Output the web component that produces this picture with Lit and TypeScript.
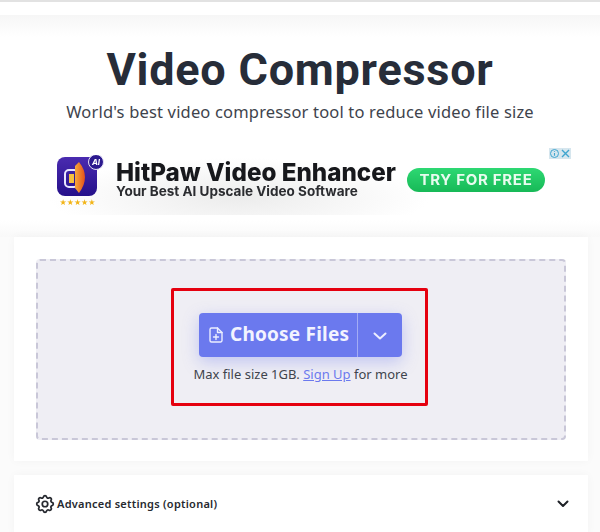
import { LitElement, css, html } from 'lit';
import { customElement } from 'lit/decorators.js';

@customElement('app-root')
export class AppRoot extends LitElement {
  static styles = css`
    :host {
      display: block;
      width: 600px;
      height: 532px;
      overflow: hidden;
      background: #fbfbfb;
      font-family: 'Noto Sans', 'Liberation Sans', sans-serif;
      color: #2b303a;
    }

    .topbar {
      height: 13px;
      background: #fff;
      border-top: 2px solid #e2e2e2;
    }

    .hero {
      height: 222px;
      padding-top: 28px;
      box-sizing: border-box;
      background: linear-gradient(#f6f6f6, #fff 22px, #fff 205px, #f9f9f9);
      text-align: center;
    }

    h1 {
      margin: 0;
      font-family: Roboto, sans-serif;
      font-size: 45px;
      line-height: 54px;
      font-weight: 700;
      letter-spacing: 0.75px;
      color: #272d39;
    }

    .sub {
      margin: 3px 0 0;
      font-size: 16.5px;
      line-height: 24px;
      letter-spacing: 0.17px;
      color: #3e434c;
    }

    .ad {
      display: flex;
      align-items: flex-start;
      box-sizing: border-box;
      width: 522px;
      height: 67px;
      margin: 24px 0 0 49px;
      padding: 7px 0 0 8px;
      position: relative;
      text-align: left;
      filter: blur(0.35px);
      background: radial-gradient(ellipse 190px 40px at 190px 50px, #ececec, #fff 100%);
    }

    .logo-col {
      display: flex;
      flex-direction: column;
      align-items: center;
      width: 41px;
    }

    .stars {
      margin-top: 2px;
      font-family: 'DejaVu Sans', sans-serif;
      font-size: 8px;
      line-height: 8px;
      color: #f2b417;
    }

    .ad-copy {
      margin-left: 18px;
      width: 280px;
      color: #17181c;
    }

    .ad-title {
      font-family: Inter, sans-serif;
      font-size: 24.2px;
      line-height: 24px;
      margin-top: 6px;
      font-weight: 800;
      white-space: nowrap;
    }

    .ad-tag {
      font-family: Inter, sans-serif;
      font-size: 13.5px;
      line-height: 14px;
      margin-top: -1px;
      font-weight: 700;
      white-space: nowrap;
      color: #2b2c30;
    }

    .ad-cta {
      margin: 13px 0 0 11px;
      width: 138px;
      height: 24px;
      border-radius: 12px;
      background: linear-gradient(#2ed873, #17b957);
      color: #e9fbef;
      font-family: Inter, sans-serif;
      font-size: 15px;
      line-height: 24px;
      font-weight: 700;
      letter-spacing: 0.7px;
      text-align: center;
    }

    .ad-flags {
      position: absolute;
      top: 0;
      right: 0;
      display: flex;
      width: 22px;
      height: 11px;
      background: #d6e6ee;
    }

    .card {
      margin: 0 12px 0 14px;
      background: #fff;
      box-shadow: 0 0 9px rgba(0, 0, 0, 0.035);
    }

    .upload {
      height: 224px;
      padding: 22px 22px 21px;
      box-sizing: border-box;
    }

    .drop {
      display: flex;
      align-items: center;
      justify-content: center;
      height: 100%;
      box-sizing: border-box;
      padding: 0 3px 5px 0;
      background: #efeef4;
      border: 2px dashed #c9c7d8;
      border-radius: 4px;
    }

    .highlight {
      display: flex;
      flex-direction: column;
      align-items: center;
      box-sizing: border-box;
      width: 257px;
      height: 118px;
      padding: 22px 0 0 2px;
      border: 3px solid #e5000f;
      border-radius: 2px;
    }

    .choose {
      display: flex;
      width: 203px;
      height: 44px;
      border-radius: 4px;
      background: #6b79ee;
      color: #f2f3ff;
      box-shadow: 0 5px 16px rgba(107, 121, 238, 0.35);
    }

    .choose-main {
      display: flex;
      align-items: center;
      gap: 6px;
      box-sizing: border-box;
      width: 159px;
      padding-left: 9px;
      border-right: 1px solid #a3acf5;
      font-size: 19px;
      font-weight: 700;
      letter-spacing: 0.2px;
      white-space: nowrap;
    }

    .choose-label {
      padding-bottom: 3px;
    }

    .choose-more {
      display: flex;
      flex: 1;
      align-items: center;
      justify-content: center;
      padding-top: 2px;
    }

    .limit {
      margin-top: 8px;
      font-size: 13px;
      line-height: 18px;
      color: #40444d;
      white-space: nowrap;
    }

    .limit a {
      color: #6b79ee;
      text-decoration: underline;
    }

    .settings {
      display: flex;
      align-items: center;
      justify-content: space-between;
      box-sizing: border-box;
      height: 60px;
      margin-top: 14px;
      padding: 0 18px 3px 20px;
      font-size: 11px;
      font-weight: 600;
      letter-spacing: 0.25px;
      color: #26292f;
    }

    .settings-label {
      display: flex;
      align-items: center;
      gap: 1px;
    }

    svg {
      display: block;
    }
  `;

  render() {
    return html`
      <div class="topbar"></div>
      <section class="hero">
        <h1>Video Compressor</h1>
        <p class="sub">World's best video compressor tool to reduce video file size</p>
        <div class="ad">
          <div class="logo-col">
            <svg width="48" height="42" viewBox="0 0 48 42" style="margin-right:-7px">
              <defs>
                <linearGradient id="tile" x1="0" y1="0" x2="0" y2="1">
                  <stop offset="0" stop-color="#4a2bb0" />
                  <stop offset="1" stop-color="#25108a" />
                </linearGradient>
                <linearGradient id="cone" x1="0" y1="0" x2="1" y2="0">
                  <stop offset="0" stop-color="#f7a93a" />
                  <stop offset="1" stop-color="#e2501c" />
                </linearGradient>
              </defs>
              <rect x="0" y="2" width="40" height="39" rx="8" fill="url(#tile)" />
              <rect x="8" y="15" width="13" height="17" rx="4" fill="none" stroke="#e9e6ff" stroke-width="2" />
              <rect x="12" y="19" width="5" height="9" fill="#f5c13f" />
              <path d="M18 11 L22 7 Q34 22 22 38 L18 33 Z" fill="url(#cone)" />
              <circle cx="39" cy="7" r="7.5" fill="#2c1a8f" stroke="#e3e0f5" stroke-width="1" />
              <text x="39" y="10" text-anchor="middle" font-family="Inter, sans-serif" font-size="8" font-weight="700" font-style="italic" fill="#fff">AI</text>
            </svg>
            <div class="stars">★★★★★</div>
          </div>
          <div class="ad-copy">
            <div class="ad-title">HitPaw Video Enhancer</div>
            <div class="ad-tag">Your Best AI Upscale Video Software</div>
          </div>
          <div class="ad-cta">TRY FOR FREE</div>
          <div class="ad-flags">
            <svg width="11" height="11" viewBox="0 0 11 11">
              <circle cx="5.5" cy="5.5" r="4" fill="none" stroke="#3fa5cf" stroke-width="1" />
              <path d="M5.5 3.2v0.9M5.5 5v2.8" stroke="#3fa5cf" stroke-width="1.1" />
            </svg>
            <svg width="11" height="11" viewBox="0 0 11 11">
              <path d="M2 2l7 7M9 2l-7 7" stroke="#3fa5cf" stroke-width="1.4" />
            </svg>
          </div>
        </div>
      </section>
      <section class="card upload">
        <div class="drop">
          <div class="highlight">
            <div class="choose">
              <div class="choose-main">
                <svg width="16" height="18" viewBox="0 0 16 18" fill="none" stroke="#eceeff" stroke-width="1.4" stroke-linejoin="round" stroke-linecap="round">
                  <path d="M3.5 2h6L14 6.5v8A1.5 1.5 0 0 1 12.5 16h-9A1.5 1.5 0 0 1 2 14.5v-11A1.5 1.5 0 0 1 3.5 2z" />
                  <path d="M9.5 2v4.5H14M8 8.5v5M5.5 11h5" />
                </svg>
                <span class="choose-label">Choose Files</span>
              </div>
              <div class="choose-more">
                <svg width="16" height="10" viewBox="0 0 16 10" fill="none" stroke="#eceeff" stroke-width="2" stroke-linecap="round" stroke-linejoin="round">
                  <path d="M2.5 2.5L8 7.5l5.5-5" />
                </svg>
              </div>
            </div>
            <div class="limit">Max file size 1GB. <a>Sign Up</a> for more</div>
          </div>
        </div>
      </section>
      <section class="card settings">
        <div class="settings-label">
          <svg width="22" height="22" viewBox="0 0 24 24" fill="none" stroke="#26292f" stroke-width="1.9" stroke-linecap="round" stroke-linejoin="round">
            <path d="M10.3 4.3c.4-1.8 3-1.8 3.4 0a1.7 1.7 0 0 0 2.6 1.1c1.5-.9 3.3.8 2.4 2.4a1.7 1.7 0 0 0 1 2.5c1.8.4 1.8 3 0 3.4a1.7 1.7 0 0 0-1 2.6c.9 1.5-.9 3.3-2.4 2.4a1.7 1.7 0 0 0-2.6 1c-.4 1.8-3 1.8-3.4 0a1.7 1.7 0 0 0-2.6-1c-1.5.9-3.3-.9-2.4-2.4a1.7 1.7 0 0 0-1-2.6c-1.8-.4-1.8-3 0-3.4a1.7 1.7 0 0 0 1-2.5c-.9-1.6.9-3.3 2.4-2.4a1.7 1.7 0 0 0 2.6-1.1z" />
            <circle cx="12" cy="12" r="3" />
          </svg>
          Advanced settings (optional)
        </div>
        <svg width="14" height="10" viewBox="0 0 14 10" fill="none" stroke="#1e2127" stroke-width="2" stroke-linecap="round" stroke-linejoin="round">
          <path d="M2.5 2.5L7 7l4.5-4.5" />
        </svg>
      </section>
    `;
  }
}
